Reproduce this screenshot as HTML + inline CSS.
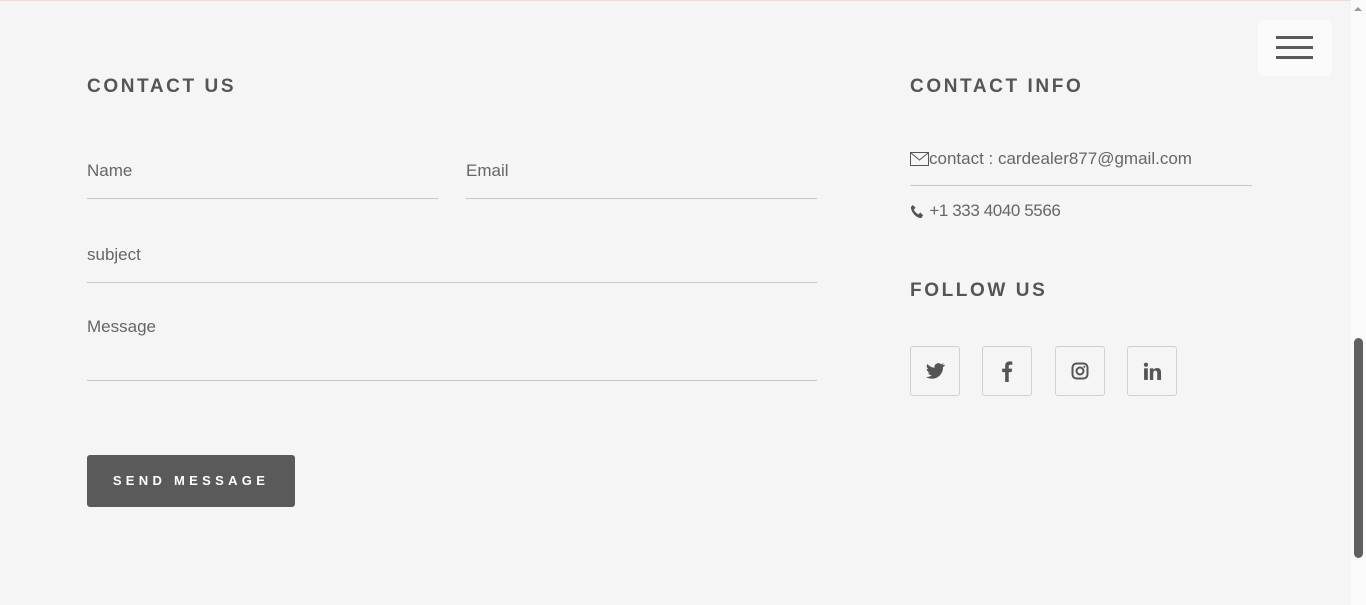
<!DOCTYPE html>
<html><head><style>
body{margin:0;width:1366px;height:605px;background:#f5f5f5;font-family:"Liberation Sans",sans-serif;overflow:hidden;position:relative;color:#555}
.top{position:absolute;left:0;top:0;width:1351px;height:1px;background:#f8d8d0}
h3{position:absolute;margin:0;font-size:19px;font-weight:bold;letter-spacing:2.6px;color:#555}
.f{position:absolute;border-bottom:1px solid #c8c8c8;font-size:17px;color:#666;font-weight:300;box-sizing:border-box;padding-top:1px}
.btn{position:absolute;left:87px;top:455px;width:208px;height:52px;background:#5a5a5a;border-radius:3px;color:#fff;font-size:13px;font-weight:bold;letter-spacing:4.3px;text-align:center;line-height:52px}
.soc{position:absolute;top:346px;width:48px;height:48px;border:1px solid #d0d0d0;border-radius:3px;display:flex;align-items:center;justify-content:center}
.sb{position:absolute;left:1351px;top:0;width:15px;height:605px;background:#fafafa}
.th{position:absolute;left:1354px;top:338px;width:9px;height:220px;background:#606060;border-radius:5px}
.menu{position:absolute;left:1258px;top:20px;width:74px;height:56px;background:#fbfbfb;border-radius:5px}
.menu i{position:absolute;left:18px;width:37px;height:3px;background:#5a5a5a}
</style></head><body>
<div class="top"></div>
<h3 style="left:87px;top:76px">CONTACT US</h3>
<h3 style="left:910px;top:76px">CONTACT INFO</h3>
<h3 style="left:910px;top:280px">FOLLOW US</h3>
<div class="f" style="left:87px;top:160px;width:351px;height:39px">Name</div>
<div class="f" style="left:466px;top:160px;width:351px;height:39px">Email</div>
<div class="f" style="left:87px;top:244px;width:730px;height:39px">subject</div>
<div class="f" style="left:87px;top:316px;width:730px;height:65px">Message</div>
<div class="btn">SEND MESSAGE</div>
<div style="position:absolute;left:910px;top:149px;font-size:17px;color:#666;display:flex;align-items:center">
<svg width="19" height="14" viewBox="0 0 19 14"><rect x="0.5" y="0.5" width="18" height="13" fill="none" stroke="#555"/><path d="M1 1l8.5 7L18 1" fill="none" stroke="#555"/></svg>contact : cardealer877@gmail.com</div>
<div style="position:absolute;left:910px;top:185px;width:342px;height:1px;background:#c8c8c8"></div>
<div style="position:absolute;left:910px;top:201px;font-size:17px;color:#666;display:flex;align-items:center;letter-spacing:-0.4px">
<svg width="15" height="15" viewBox="0 0 16 16"><path d="M3 1l3 3-2 2c1 2 3 4 5 5l2-2 3 3-2 3C7 15 1 9 1 3z" fill="#555"/></svg>&nbsp;+1 333 4040 5566</div>
<div class="soc" style="left:910px"><svg width="19" height="16" viewBox="0 0 24 20"><path d="M23 2c-1 .5-2 .7-3 .8 1-.6 2-1.6 2.3-2.7-1 .6-2 1-3.2 1.3A5 5 0 0 0 10.8 6 14 14 0 0 1 1.6 1.2a5 5 0 0 0 1.5 6.6c-.8 0-1.6-.3-2.2-.6 0 2.4 1.7 4.4 4 4.8-.7.2-1.5.2-2.2.1.6 2 2.5 3.4 4.6 3.4A10 10 0 0 1 0 17.5 14 14 0 0 0 7.5 19.7c9 0 14-7.5 14-14v-.6c1-.7 1.8-1.6 2.5-2.6z" fill="#555"/></svg></div>
<div class="soc" style="left:982px"><svg width="12" height="22" viewBox="0 0 10 19"><path d="M6.5 19V10.5H9l.4-3H6.5V5.6c0-.9.3-1.5 1.5-1.5h1.6V1.4C9.3 1.3 8.4 1.2 7.3 1.2 5 1.2 3.4 2.6 3.4 5.2v2.3H.8v3h2.6V19z" fill="#555"/></svg></div>
<div class="soc" style="left:1055px"><svg width="18" height="18" viewBox="0 0 18 18"><rect x="1.5" y="1.5" width="15" height="15" rx="4" fill="none" stroke="#555" stroke-width="2"/><circle cx="9" cy="9" r="3.5" fill="none" stroke="#555" stroke-width="2"/><circle cx="13.3" cy="4.7" r="1" fill="#555"/></svg></div>
<div class="soc" style="left:1127px"><svg width="19" height="19" viewBox="0 0 18 18"><rect x="1" y="6" width="3.6" height="11" fill="#555"/><circle cx="2.8" cy="2.6" r="2" fill="#555"/><path d="M6.5 6h3.4v1.6c.6-1 1.8-1.9 3.6-1.9 3 0 3.6 2 3.6 4.6V17h-3.6v-5.8c0-1.4 0-3-1.8-3s-2 1.4-2 2.9V17H6.5z" fill="#555"/></svg></div>
<div class="menu"><i style="top:16px"></i><i style="top:26px"></i><i style="top:36px"></i></div>
<div class="sb"></div><div class="th"></div>
<div style="position:absolute;left:1354px;top:7px;width:0;height:0;border-left:4px solid transparent;border-right:4px solid transparent;border-bottom:4px solid #999"></div>
</body></html>
